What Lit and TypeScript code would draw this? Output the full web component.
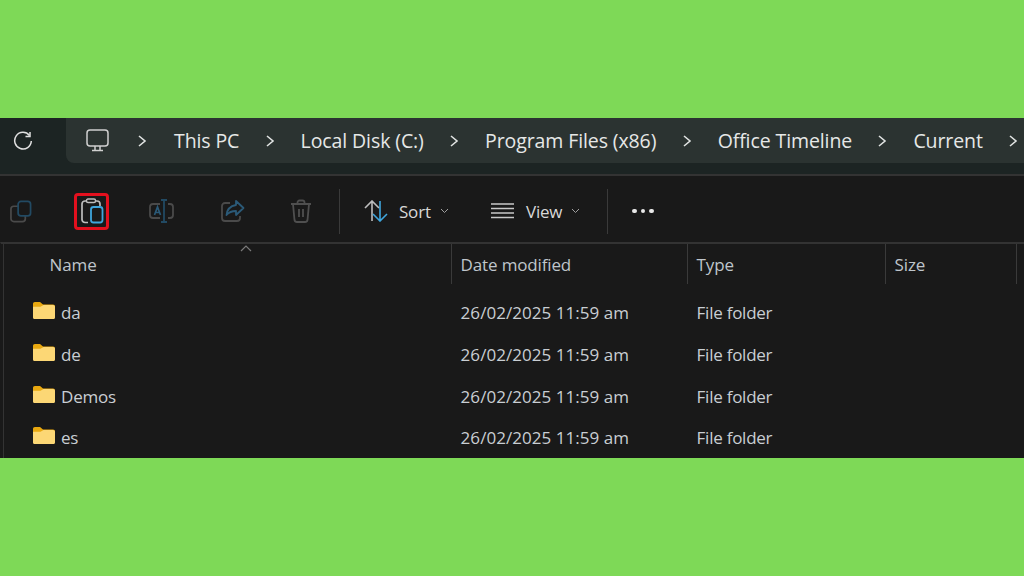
import { LitElement, html, css, svg } from "lit";
import { customElement } from "lit/decorators.js";

const chevron = html`<svg class="chev" width="10" height="14" viewBox="0 0 10 14"><path d="M2 2l6 5-6 5" fill="none" stroke="#e0e3e2" stroke-width="1.6"/></svg>`;
const caret = html`<svg class="caret" width="9" height="6" viewBox="0 0 9 6"><path d="M1 1l3.5 3.5L8 1" fill="none" stroke="#a0a0a0" stroke-width="1"/></svg>`;
const folder = html`<svg class="folder" width="22" height="17" viewBox="0 0 22 17"><path d="M0 2C0 .8.600 0 2 0h5l3 2.500H20c1.200 0 2 .8 2 2v1H0z" fill="#e9a80f"/><path d="M0 15.500V4.800h7.500l3-1.800H20c1.200 0 2 .8 2 2v10.500c0 1-.8 1.500-2 1.500H2C.8 17 0 16.500 0 15.500z" fill="#fcd775"/></svg>`;

const icons = {
  copy: svg`<rect x="1" y="6" width="15" height="16" rx="3" fill="none" stroke="#4a4a4a" stroke-width="1.8"/><rect x="8.500" y="1" width="13" height="15" rx="3" fill="#191919" stroke="#224a63" stroke-width="1.800"/>`,
  paste: svg`<path d="M8 24.500H5a3 3 0 0 1-3-3V6a3 3 0 0 1 3-3h12a3 3 0 0 1 3 3v2" fill="none" stroke="#bdbdbd" stroke-width="1.700"/><rect x="6.500" y="1" width="9" height="3.500" rx="1.500" fill="#191919" stroke="#bdbdbd" stroke-width="1.400"/><rect x="11" y="9" width="11.500" height="15.500" rx="2.500" fill="none" stroke="#3fa6dd" stroke-width="1.800"/>`,
  rename: svg`<path d="M11 5H4a3 3 0 0 0-3 3v8a3 3 0 0 0 3 3h7M19 5h2a3 3 0 0 1 3 3v8a3 3 0 0 1-3 3h-2" fill="none" stroke="#4a4a4a" stroke-width="1.800"/><path d="M12 1h6M15 1v22M12 23h6" fill="none" stroke="#224a63" stroke-width="1.800"/><path d="M5.500 16l3-8 3 8M6.700 13.500h3.600" fill="none" stroke="#2b5a78" stroke-width="1.700"/>`,
  share: svg`<path d="M10 4H5a3 3 0 0 0-3 3v12a3 3 0 0 0 3 3h12a3 3 0 0 0 3-3v-2" fill="none" stroke="#4a4a4a" stroke-width="1.800"/><path d="M16 2l7.500 7-7.500 7v-4c-4 0-7 1-9.500 4 .5-5 4-9 9.500-10z" fill="#191919" stroke="#2b5a78" stroke-width="1.800" stroke-linejoin="round"/>`,
  del: svg`<path d="M1 5h20M7.500 5V3.500A2 2 0 0 1 9.500 1.500h3a2 2 0 0 1 2 2V5M3 5l1.500 16a2.500 2.500 0 0 0 2.500 2h8a2.500 2.500 0 0 0 2.500-2L19 5M9 10v8M13 10v8" fill="none" stroke="#4f4f4f" stroke-width="1.800"/>`,
};

const crumbs = ["This PC", "Local Disk (C:)", "Program Files (x86)", "Office Timeline", "Current"];
const rows = ["da", "de", "Demos", "es"];

@customElement("app-root")
export class AppRoot extends LitElement {
  static styles = css`
    :host { display: block; width: 1024px; height: 576px; background: #7ed957; overflow: hidden; font-family: "Open Sans", "Noto Sans", sans-serif; }
    .window { margin-top: 118px; height: 340px; background: #191919; overflow: hidden; display: flex; flex-direction: column; }
    .addr { height: 56px; flex: none; background: #1c2423; border-bottom: 2px solid #333; display: flex; align-items: flex-start; }
    .refresh { width: 66px; height: 45px; flex: none; display: flex; align-items: center; padding-left: 13px; box-sizing: border-box; }
    .crumbs { flex: 1; height: 45px; background: #2b3331; border-radius: 0 0 0 8px; display: flex; align-items: center; padding-left: 20px; color: #e6e8e7; font-size: 19.500px; letter-spacing: -0.1px; white-space: nowrap; overflow: hidden; }
    .pc { margin-right: 27px; flex: none; }
    .chev { margin-right: 26px; flex: none; }
    .pc + .chev { margin-right: 27px; }
    .crumb { margin-right: 25.300px; }
    .toolbar { height: 66px; box-sizing: border-box; padding: 4px 0 0 10px; flex: none; display: flex; align-items: center; color: #d8d8d8; font-size: 17px; letter-spacing: -0.2px; }
    .tool { flex: none; display: flex; align-items: center; justify-content: center; }
    .t-copy { width: 22px; margin-right: 42px; }
    .t-paste { width: 35px; height: 37px; margin-right: 40px; border: 3px solid #e3101e; border-radius: 4px; box-sizing: border-box; }
    .t-rename { width: 25px; margin-right: 46px; }
    .t-share { width: 25px; margin-right: 45px; }
    .t-del { width: 22px; margin-right: 27px; }
    .sep { width: 1px; height: 45px; background: #3a3a3a; flex: none; }
    .sort { display: flex; align-items: center; margin-left: 24px; width: 127px; flex: none; }
    .sort svg { margin-right: 11px; }
    .sort svg.caret { margin: 0 0 0 9px; }
    .caret { margin-left: 9px; }
    .view { display: flex; align-items: center; flex: none; width: 116px; }
    .view svg.lines { margin-right: 12px; }
    .dots { display: flex; gap: 4px; margin-left: 24px; }
    .dot { width: 4.500px; height: 4.500px; border-radius: 50%; background: #e8e8e8; }
    .list { flex: 1; border-top: 2px solid #333; border-left: 1px solid #191919; position: relative; min-height: 0; }
    .list::before { content: ""; position: absolute; left: 2px; top: 0; bottom: 0; width: 1px; background: #333; }
    .sortmark { position: absolute; left: 239px; top: 1px; }
    .cols { display: grid; grid-template-columns: 451px 236px 198px 131px; }
    .head { height: 40px; color: #bfc5cb; font-size: 17px; letter-spacing: -0.15px; margin-bottom: 8px; }
    .hc { display: flex; align-items: center; height: 40px; border-right: 1px solid #3a3a3a; padding: 0 0 0 8.600px; box-sizing: border-box; }
    .hc.first { padding-left: 48.600px; }
    .row { height: 41.700px; align-items: center; color: #c9ced3; font-size: 17px; letter-spacing: -0.2px; }
    .name { display: flex; align-items: center; padding-left: 32px; gap: 6px; }
    .folder { flex: none; margin-top: -4px; }
    .cell { padding-left: 8.600px; }
    .date { letter-spacing: 0.05px; }
    .type { letter-spacing: -0.25px; }
  `;

  render() {
    return html`<div class="window">
      <div class="addr">
        <div class="refresh"><svg width="20" height="20" viewBox="0 0 20 20"><path d="M16.500 4.500A8.300 8.300 0 1 0 18.300 10" fill="none" stroke="#e0e0e0" stroke-width="1.500"/><path d="M17 1v4.500h-4.500" fill="none" stroke="#e0e0e0" stroke-width="1.500"/></svg></div>
        <div class="crumbs">
          <svg class="pc" width="24" height="24" viewBox="0 0 24 24"><rect x="1" y="1" width="21" height="16" rx="3" fill="none" stroke="#d0d0d0" stroke-width="1.500"/><path d="M9 17v4M14 17v4M6 21.500h11" fill="none" stroke="#d0d0d0" stroke-width="1.500"/></svg>
          ${chevron}
          ${crumbs.map((c) => html`<span class="crumb">${c}</span>${chevron}`)}
        </div>
      </div>
      <div class="toolbar">
        <div class="tool t-copy"><svg width="23" height="23" viewBox="0 0 23 23">${icons.copy}</svg></div>
        <div class="tool t-paste"><svg width="24" height="27" viewBox="0 0 24 27">${icons.paste}</svg></div>
        <div class="tool t-rename"><svg width="25" height="24" viewBox="0 0 25 24">${icons.rename}</svg></div>
        <div class="tool t-share"><svg width="25" height="24" viewBox="0 0 25 24">${icons.share}</svg></div>
        <div class="tool t-del"><svg width="22" height="24" viewBox="0 0 22 24">${icons.del}</svg></div>
        <div class="sep"></div>
        <div class="sort">
          <svg width="24" height="22" viewBox="0 0 24 22"><path d="M8 21V2M1 8l7-7 7 7" fill="none" stroke="#bdbdbd" stroke-width="1.600"/><path d="M16 1v19M9 14l7 7 7-7" fill="none" stroke="#3fa6dd" stroke-width="1.600"/></svg>
          Sort${caret}
        </div>
        <div class="view">
          <svg class="lines" width="23" height="16" viewBox="0 0 23 16"><path d="M0 1h23M0 5.500h23M0 10h23M0 14.500h23" stroke="#c8c8c8" stroke-width="1.500"/></svg>
          View${caret}
        </div>
        <div class="sep"></div>
        <div class="dots"><div class="dot"></div><div class="dot"></div><div class="dot"></div></div>
      </div>
      <div class="list">
        <svg class="sortmark" width="12" height="7" viewBox="0 0 12 7"><path d="M1 6l5-5 5 5" fill="none" stroke="#7a7a7a" stroke-width="1.200"/></svg>
        <div class="cols head">
          <div class="hc first">Name</div><div class="hc">Date modified</div><div class="hc">Type</div><div class="hc">Size</div>
        </div>
        ${rows.map((r) => html`<div class="cols row">
          <div class="name">${folder}<span>${r}</span></div>
          <div class="cell date">26/02/2025 11:59 am</div>
          <div class="cell type">File folder</div>
          <div></div>
        </div>`)}
      </div>
    </div>`;
  }
}
